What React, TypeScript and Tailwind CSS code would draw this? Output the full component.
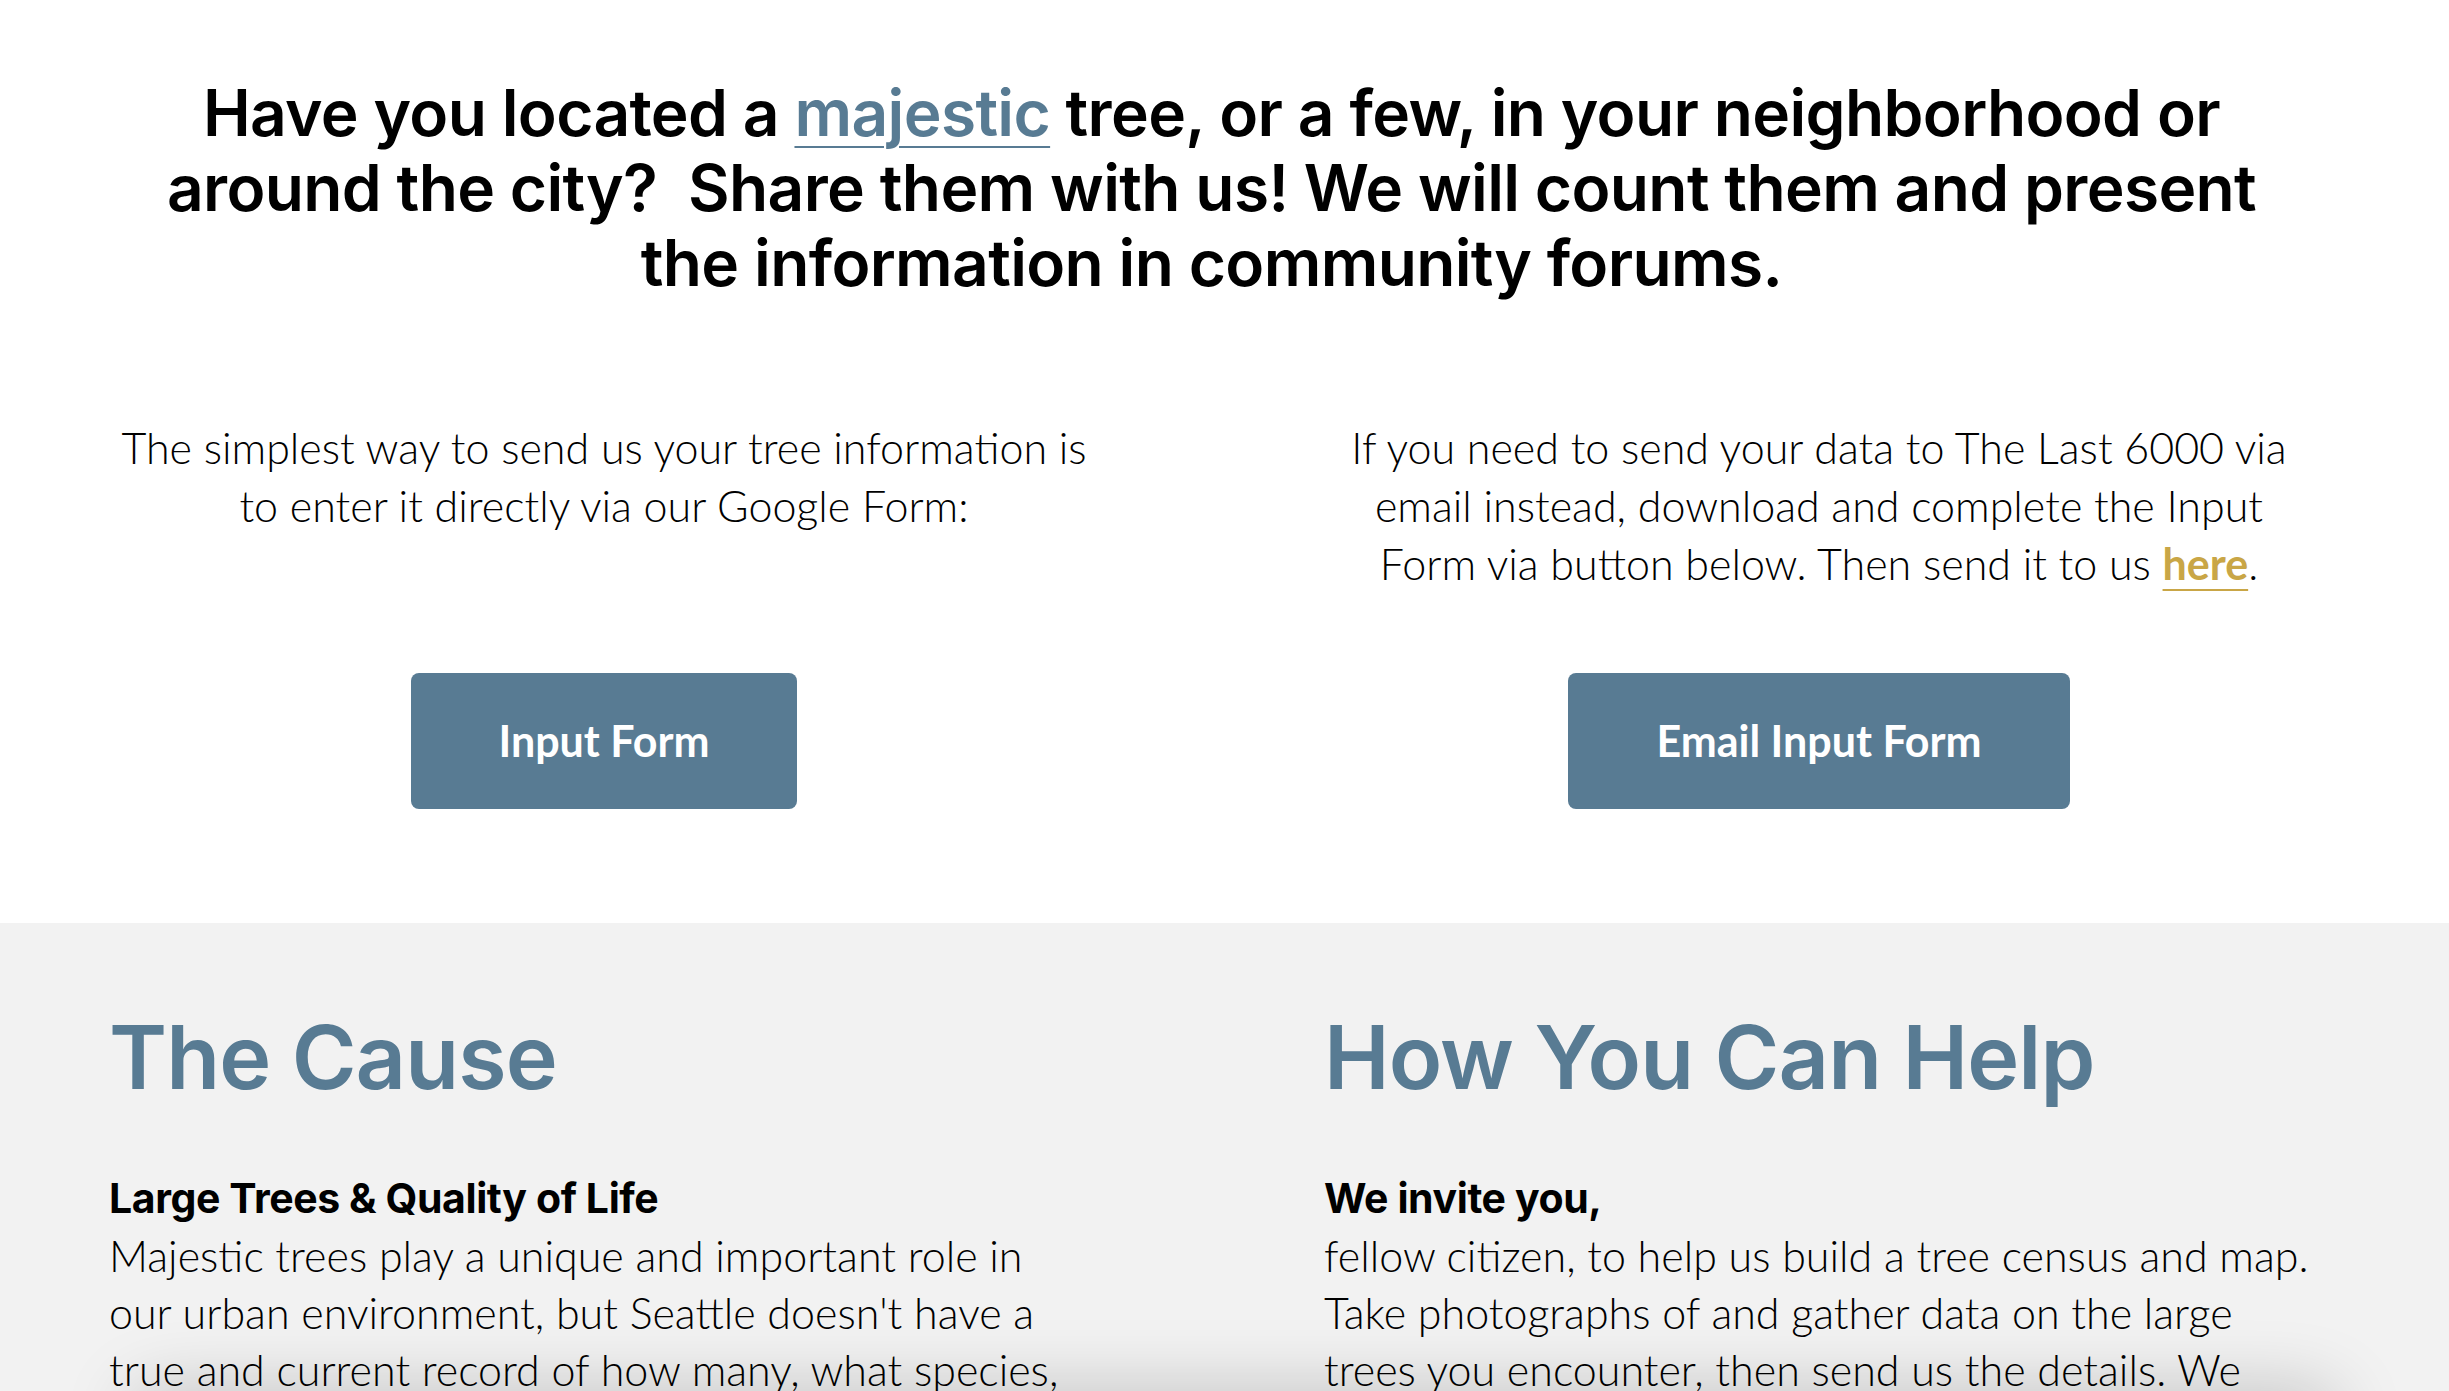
import React from "react";

export default function App() {
  return (
    <div className="relative min-h-screen bg-white text-black overflow-hidden">
      <section className="bg-white pl-[109px] pr-[135px] pt-[75px] pb-[114px]">
        <h1 className="font-[Inter,sans-serif] text-center text-[64px] leading-[75px] font-semibold tracking-[-0.01em] text-black whitespace-nowrap">
          Have you located a{" "}
          <a className="text-[#587b93] underline decoration-[2px] underline-offset-[10px]">majestic</a>{" "}
          tree, or a few, in your neighborhood or
          <br />
          around the city?&nbsp; Share them with us! We will count them and present
          <br />
          the information in community forums.
        </h1>

        <div className="mt-[119px] grid grid-cols-[990px_990px] gap-x-[225px]">
          <p className="font-[Lato,sans-serif] text-center text-[43px] leading-[58px] font-light whitespace-nowrap">
            The simplest way to send us your tree information is
            <br />
            to enter it directly via our Google Form:
          </p>
          <p className="font-[Lato,sans-serif] text-center text-[43px] leading-[58px] font-light whitespace-nowrap">
            If you need to send your data to The Last 6000 via
            <br />
            email instead, download and complete the Input
            <br />
            Form via button below. Then send it to us{" "}
            <a className="font-bold text-[#c9a646] underline decoration-[2px] underline-offset-[9px]">here</a>.
          </p>
          <div className="flex justify-center pt-[80px]">
            <button className="font-[Lato,sans-serif] w-[386px] h-[136px] rounded-[8px] bg-[#587b93] text-white text-[43px] font-bold">
              Input Form
            </button>
          </div>
          <div className="flex justify-center pt-[80px]">
            <button className="font-[Lato,sans-serif] w-[502px] h-[136px] rounded-[8px] bg-[#587b93] text-white text-[43px] font-bold">
              Email Input Form
            </button>
          </div>
        </div>
      </section>

      <section className="bg-[#f2f2f2] pl-[109px] pr-[135px] pt-[83px] pb-[120px]">
        <div className="grid grid-cols-[990px_990px] gap-x-[225px]">
          <div>
            <h2 className="font-[Inter,sans-serif] text-[88px] leading-[103px] font-semibold text-[#587b93] tracking-[-0.01em]">
              The Cause
            </h2>
            <h3 className="font-[Inter,sans-serif] mt-[61px] text-[41px] leading-[57px] font-bold tracking-[-0.01em]">
              Large Trees &amp; Quality of Life
            </h3>
            <p className="font-[Lato,sans-serif] text-[43px] leading-[57px] font-light whitespace-nowrap">
              Majestic trees play a unique and important role in
              <br />
              our urban environment, but Seattle doesn't have a
              <br />
              true and current record of how many, what species,
              <br />
              and where these trees are located.
            </p>
          </div>
          <div>
            <h2 className="font-[Inter,sans-serif] text-[88px] leading-[103px] font-semibold text-[#587b93] tracking-[-0.01em]">
              How You Can Help
            </h2>
            <h3 className="font-[Inter,sans-serif] mt-[61px] text-[41px] leading-[57px] font-bold tracking-[-0.01em]">
              We invite you,
            </h3>
            <p className="font-[Lato,sans-serif] text-[43px] leading-[57px] font-light whitespace-nowrap">
              fellow citizen, to help us build a tree census and map.
              <br />
              Take photographs of and gather data on the large
              <br />
              trees you encounter, then send us the details. We
              <br />
              will add them to our growing map.
            </p>
          </div>
        </div>
      </section>

      <div className="fixed left-[130px] right-[110px] bottom-[-60px] h-[60px] rounded-[40px] bg-white shadow-[0_0_70px_rgba(0,0,0,0.22)]" />
    </div>
  );
}
